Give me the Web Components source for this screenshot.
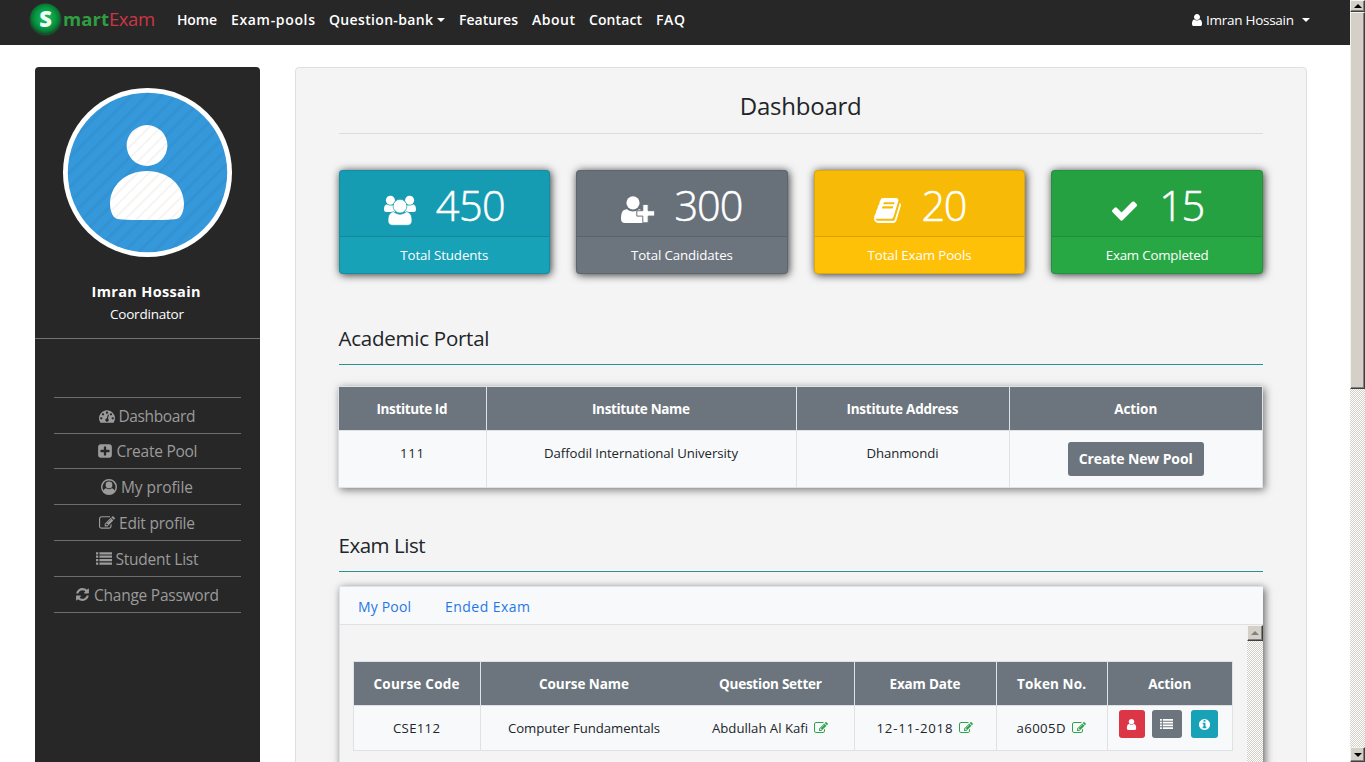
<!DOCTYPE html>
<html lang="en">
<head>
<meta charset="utf-8">
<title>SmartExam - Dashboard</title>
<style>
html,body{margin:0;height:762px;overflow:hidden;background:#fff}
body{font-family:"Open Sans","Noto Sans",sans-serif;font-size:13.500px;color:#212529}
</style>
</head>
<body>
<exam-app></exam-app>
<script>
const ICONS = {
user:'<path d="M1536 1399q0 109-62.500 187t-150.500 78h-854q-88 0-150.500-78t-62.500-187q0-85 8.500-160.500t31.500-152 58.500-131 94-89 134.500-34.500q131 128 313 128t313-128q76 0 134.500 34.500t94 89 58.500 131 31.500 152 8.500 160.500zm-256-887q0 159-112.500 271.500t-271.500 112.500-271.500-112.500-112.500-271.500 112.500-271.500 271.500-112.500 271.500 112.500 112.500 271.500z"/>',
list:'<path d="M0 130h256v250H0zM384 130h1408v250H384zM0 514h256v250H0zM384 514h1408v250H384zM0 898h256v250H0zM384 898h1408v250H384zM0 1282h256v250H0zM384 1282h1408v250H384z"/>',
check:'<path d="M1671 566q0 40-28 68l-724 724-136 136q-28 28-68 28t-68-28l-136-136-362-362q-28-28-28-68t28-68l136-136q28-28 68-28t68 28l294 295 656-657q28-28 68-28t68 28l136 136q28 28 28 68z"/>',
plus:'<path d="M1408 960v-128q0-26-19-45t-45-19h-320v-320q0-26-19-45t-45-19h-128q-26 0-45 19t-19 45v320h-320q-26 0-45 19t-19 45v128q0 26 19 45t45 19h320v320q0 26 19 45t45 19h128q26 0 45-19t19-45v-320h320q26 0 45-19t19-45zm256-544v960q0 119-84.500 203.500t-203.500 84.500h-960q-119 0-203.500-84.500t-84.500-203.500v-960q0-119 84.500-203.500t203.500-84.500h960q119 0 203.500 84.500t84.500 203.500z"/>',
edit:'<path d="M888 1184l116-116-152-152-116 116v56h96v96h56zm440-720q-16-16-33 1l-350 350q-17 17-1 33t33-1l350-350q17-17 1-33zm80 594v190q0 119-84.500 203.500t-203.500 84.500h-832q-119 0-203.500-84.500t-84.500-203.500v-832q0-119 84.500-203.500t203.500-84.500h832q63 0 117 25 15 7 18 23 3 17-9 29l-49 49q-14 14-32 8-23-6-45-6h-832q-66 0-113 47t-47 113v832q0 66 47 113t113 47h832q66 0 113-47t47-113v-126q0-13 9-22l64-64q15-15 35-7t20 29zm-96-738l288 288-672 672h-288v-288zm444 132l-92 92-288-288 92-92q28-28 68-28t68 28l152 152q28 28 28 68t-28 68z"/>',
refresh:'<path d="M1639 1056q0 5-1 7-64 268-268 434.500t-478 166.500q-146 0-282.500-55t-243.500-157l-129 129q-19 19-45 19t-45-19-19-45v-448q0-26 19-45t45-19h448q26 0 45 19t19 45-19 45l-137 137q71 66 161 102t187 36q134 0 250-65t186-179q11-17 53-117 8-23 30-23h192q13 0 22.500 9.500t9.500 22.500zm25-800v448q0 26-19 45t-45 19h-448q-26 0-45-19t-19-45 19-45l138-138q-148-137-349-137-134 0-250 65t-186 179q-11 17-53 117-8 23-30 23h-199q-13 0-22.500-9.500t-9.500-22.500v-7q65-268 270-434.500t480-166.500q146 0 284 55.500t245 156.500l130-129q19-19 45-19t45 19 19 45z"/>',
info:'<path d="M1152 1376v-160q0-14-9-23t-23-9h-96v-512q0-14-9-23t-23-9h-320q-14 0-23 9t-9 23v160q0 14 9 23t23 9h96v320h-96q-14 0-23 9t-9 23v160q0 14 9 23t23 9h448q14 0 23-9t9-23zm-128-896v-160q0-14-9-23t-23-9h-192q-14 0-23 9t-9 23v160q0 14 9 23t23 9h192q14 0 23-9t9-23zm640 416q0 209-103 385.500t-279.500 279.500-385.500 103-385.500-103-279.500-279.500-103-385.500 103-385.500 279.500-279.500 385.500-103 385.500 103 279.500 279.500 103 385.500z"/>',
dash:'<path d="M384 1152q0-53-37.500-90.500t-90.500-37.500-90.500 37.500-37.500 90.500 37.500 90.500 90.500 37.500 90.500-37.500 37.500-90.500zm192-448q0-53-37.500-90.500t-90.500-37.500-90.500 37.500-37.500 90.500 37.500 90.500 90.500 37.500 90.500-37.500 37.500-90.500zm428 481l101-382q6-26-7.500-48.500t-38.500-29.500-48 6.500-30 39.500l-101 382q-60 5-107 43.500t-63 98.500q-20 77 20 146t117 89 146-20 89-117q16-60-6-117t-72-91zm660-33q0-53-37.500-90.500t-90.500-37.500-90.500 37.500-37.500 90.500 37.500 90.500 90.500 37.500 90.500-37.500 37.500-90.500zm-640-640q0-53-37.500-90.500t-90.500-37.500-90.500 37.500-37.500 90.500 37.500 90.500 90.500 37.500 90.500-37.500 37.500-90.500zm448 192q0-53-37.500-90.500t-90.500-37.500-90.500 37.500-37.500 90.500 37.500 90.500 90.500 37.500 90.500-37.500 37.500-90.500zm320 448q0 261-141 483-19 29-54 29h-1402q-35 0-54-29-141-221-141-483 0-182 71-348t191-286 286-191 348-71 348 71 286 191 191 286 71 348z"/>',
book:'<path d="M1703 478q40 57 18 129l-275 906q-19 64-76.500 107.500t-122.500 43.500h-923q-77 0-148.500-53.500t-99.500-131.500q-24-67-2-127 0-4 3-27t4-37q1-8-3-21.500t-3-19.500q2-11 8-21t16.500-23.500 16.500-23.500q23-38 45-91.500t30-91.500q3-10 .5-30t-.5-28q3-11 17-28t17-23q21-36 42-92t25-90q1-9-2.500-32t.5-28q4-13 22-30.500t22-22.500q19-26 42.500-84.500t27.500-96.500q1-8-3-25.500t-2-26.500q2-8 9-18t18-23 17-21q8-12 16.500-30.500t15-35 16-36 19.500-32 26.500-23.500 36-11.500 47.500 5.500l-1 3q38-9 51-9h761q74 0 114 56t18 130l-274 906q-36 119-71.500 153.500t-128.500 34.500h-869q-27 0-38 15-11 16-1 43 24 70 144 70h923q29 0 56-15.500t35-41.500l300-987q7-22 5-57 38 15 59 43zm-1064 2q-4 13 2 22.500t20 9.500h608q13 0 25.500-9.500t16.500-22.500l21-64q4-13-2-22.500t-20-9.500h-608q-13 0-25.500 9.500t-16.500 22.500zm-83 256q-4 13 2 22.500t20 9.500h608q13 0 25.500-9.500t16.500-22.500l21-64q4-13-2-22.500t-20-9.500h-608q-13 0-25.500 9.500t-16.500 22.500z"/>',
profile:'<path fill-rule="evenodd" d="M896 0a896 896 0 1 0 0 1792A896 896 0 1 0 896 0zM896 170a726 726 0 0 1 600 1130c-42-170-136-276-286-276-84 78-190 120-314 120s-230-42-314-120c-150 0-244 106-286 276A726 726 0 0 1 896 170z"/><circle cx="896" cy="660" r="380"/>',
users:'<g transform="scale(56)"><circle cx="6.400" cy="5.200" r="4.500"/><circle cx="25.600" cy="5.200" r="4.500"/><path d="M3 9.500c2 1.400 4.800 1.400 7 .2L11 17H2.500Q0 17 0 14.500c0-2.500.8-5 3-5zM29 9.500c-2 1.400-4.800 1.400-7 .2L21 17h8.500Q32 17 32 14.500c0-2.500-.8-5-3-5z"/><g stroke="#179db2" stroke-width=".7"><path d="M9.800 16.700c3.400 3.300 9 3.300 12.400 0 3.700.2 5.800 3.200 5.800 8.900 0 3.200-1.800 4.700-4.400 4.700h-15.200c-2.600 0-4.400-1.500-4.400-4.700 0-5.700 2.100-8.700 5.800-8.900z"/><circle cx="16" cy="11.200" r="6.900"/></g></g>',
addUser:'<g transform="scale(52.700)"><circle cx="12" cy="9.800" r="6.600"/><path d="M6.100 16.200c3.600 3 8.200 3 11.800 0l1.600.3V23h5v6.200q-1 .8-3 .8H4.100Q0 30 0 26c0-5.600 1.200-9.800 6.100-9.800z"/><path stroke="#69727a" stroke-width="1" d="M21.800 11.400h5.400v6.300h6.500v5.400h-6.500v6.700h-5.400v-6.700h-6v-5.400h6z"/></g>'
};
class Base extends HTMLElement{
  render(css,html){
    const t=document.createElement('template');
    t.innerHTML='<style>'+css+'</style>'+html;
    this.attachShadow({mode:'open'}).append(t.content.cloneNode(true));
  }
}
/* A one-line label whose tracking is adjusted to a given width. */
customElements.define('fit-text',class extends Base{
  connectedCallback(){
    if(this.shadowRoot)return;
    this.render(':host{display:inline-block;white-space:nowrap;flex:none}span{display:inline-block}','<span><slot></slot></span>');
    const w=+this.getAttribute('w');
    if(w){
      const s=this.shadowRoot.querySelector('span');
      const n=this.textContent.length,d=(w-s.getBoundingClientRect().width)/Math.max(1,n-1);
      s.style.letterSpacing=d+'px';s.style.marginRight=-d+'px';
    }
  }
});
customElements.define('fa-icon',class extends Base{
  connectedCallback(){
    if(this.shadowRoot)return;
    const s=this.getAttribute('size')||16;
    this.render(`:host{display:inline-block;flex:none;width:${s}px;height:${s}px}svg{display:block;overflow:visible;fill:currentColor}`,
    `<svg width="${s}" height="${s}" viewBox="0 0 1792 1792">${ICONS[this.getAttribute('name')]}</svg>`);
  }
});
customElements.define('nav-bar',class extends Base{
  connectedCallback(){this.render(`
  :host{display:flex;height:45px;background:#272727;color:#fff;font-size:14px;font-weight:600;box-sizing:border-box;padding:0 40px 5px 29px;align-items:center}
  .logo{flex:none;margin-top:-2px}
  .brand{display:flex;align-items:center;font-size:18.500px;width:93px;margin:-3px 21px 0 1px}
  .brand b{color:#2f9e41;font-weight:700}.brand i{font-style:normal;font-weight:400;color:#cc3545}
  nav{display:flex;gap:14px;align-items:center;margin-top:-2px}
  .caret{display:inline-block;border:4px solid transparent;border-top-color:currentColor;border-bottom:0;vertical-align:3px;margin-left:4px}
  .me{margin-left:auto;display:flex;align-items:center;font-weight:400;font-size:13.500px}
  .me fa-icon{margin-right:2px}.me .caret{margin-left:8px}`,`
  <svg class="logo" width="33" height="33" viewBox="0 0 33 33"><defs><radialGradient id="g" cx="50%" cy="45%"><stop offset="0" stop-color="#25b865"/><stop offset=".62" stop-color="#079b43"/><stop offset=".85" stop-color="#087936"/><stop offset="1" stop-color="#174d2b"/></radialGradient></defs><circle cx="16.500" cy="16.500" r="16" fill="url(#g)"/><text x="16.500" y="24.300" text-anchor="middle" font-family="Open Sans" font-weight="800" font-size="22" fill="#effff6">S</text></svg>
  <div class="brand"><b><fit-text w="46">mart</fit-text></b><i><fit-text w="46">Exam</fit-text></i></div>
  <nav><fit-text w="40">Home</fit-text><fit-text w="84">Exam-pools</fit-text><span><fit-text w="104">Question-bank</fit-text><span class="caret"></span></span><fit-text w="59">Features</fit-text><fit-text w="43">About</fit-text><fit-text w="53">Contact</fit-text><fit-text w="29">FAQ</fit-text></nav>
  <div class="me"><fa-icon name="user" size="14"></fa-icon><fit-text w="88">Imran Hossain</fit-text><span class="caret"></span></div>`)}
});
customElements.define('side-item',class extends Base{
  connectedCallback(){const a=n=>this.getAttribute(n);this.render(`
  :host{display:flex;height:36px;box-sizing:border-box;border-bottom:1px solid #6d6d6d;align-items:center;justify-content:center;gap:4px;font-size:15.500px;color:#9b9b9b;padding-right:1px}`,
  `<fa-icon name="${a('icon')}" size="${a('size')||16}"></fa-icon><fit-text w="${a('w')}">${a('label')}</fit-text>`)}
});
customElements.define('side-bar',class extends Base{
  connectedCallback(){this.render(`
  :host{display:block;box-sizing:border-box;width:225px;height:695px;background:#272727;border-radius:4px 4px 0 0;color:#fff;text-align:center;padding-top:21px}
  svg{display:block;margin:0 auto 23px}
  .name{font-weight:700;font-size:14.500px;line-height:23px;padding-right:3px}.role{line-height:22px;height:35px;border-bottom:1px solid #737373;font-size:13.500px;padding-right:1px}
  .menu{margin:58px 19px 0;border-top:1px solid #6d6d6d}`,`
  <svg width="169" height="169" viewBox="0 0 169 169"><defs><pattern id="p" width="10.500" height="10.500" patternUnits="userSpaceOnUse" patternTransform="rotate(45)"><rect width="10.500" height="10.500" fill="#3498db"/><rect width="3" height="10.500" fill="#3292d2"/></pattern><pattern id="q" width="8" height="8" patternUnits="userSpaceOnUse" patternTransform="rotate(45)"><rect width="8" height="8" fill="#fff"/><rect width="1.500" height="8" fill="#f4f1ef"/></pattern></defs>
  <circle cx="84.500" cy="84.500" r="84.500" fill="#fff"/><circle cx="84.500" cy="84.500" r="79.700" fill="url(#p)"/><circle cx="84" cy="57.500" r="20.400" fill="url(#q)"/><path d="M84 83c22 0 37 15 37 33 0 5-1.500 10-4 13q-1.500 1.800-5 2.200c-18 1.200-38 1.200-56 0q-3.500-.4-5-2.200c-2.500-3-4-8-4-13 0-18 15-33 37-33z" fill="url(#q)"/></svg>
  <div class="name"><fit-text w="109">Imran Hossain</fit-text></div><div class="role"><fit-text w="74">Coordinator</fit-text></div>
  <div class="menu"><side-item icon="dash" label="Dashboard" w="77"></side-item><side-item icon="plus" label="Create Pool" w="81" style="height:35px"></side-item><side-item icon="profile" label="My profile" w="72"></side-item><side-item icon="edit" label="Edit profile" w="76"></side-item><side-item icon="list" label="Student List" w="83"></side-item><side-item icon="refresh" label="Change Password" w="125" size="15"></side-item></div>`)}
});
customElements.define('stat-card',class extends Base{
  connectedCallback(){const a=n=>this.getAttribute(n);this.render(`
  :host{display:flex;flex-direction:column;height:104px;box-sizing:border-box;background:${a('color')};border:1px solid rgba(0,0,0,.125);border-radius:4px;color:#fff;box-shadow:1px 1px 8px rgba(0,0,0,.8)}
  .top{height:65px;background:rgba(0,0,0,.03);border-bottom:1px solid rgba(0,0,0,.125);display:flex;justify-content:center;align-items:center;font-size:41.500px;font-weight:300;gap:${a('gap')}px;line-height:65px;padding-left:1px}
  .top fit-text{margin-top:4px;-webkit-text-stroke:.5px #fff}
  .top fa-icon{margin-top:${a('dy')}px}
  .bot{flex:1;display:flex;align-items:center;justify-content:center;font-size:13.300px;padding-bottom:1px}`,
  `<div class="top"><fa-icon name="${a('icon')}" size="${a('size')}"></fa-icon><fit-text w="${a('nw')}">${a('value')}</fit-text></div><div class="bot"><fit-text w="${a('w')}">${a('label')}</fit-text></div>`)}
});
customElements.define('section-title',class extends Base{
  connectedCallback(){this.render(`:host{display:block;box-sizing:border-box;height:45px;border-bottom:1px solid #2b9193;font-size:20.500px;line-height:36px}`,`<slot></slot>`)}
});
/* Table row: cells are slotted into a grid whose columns come from --cols. */
customElements.define('table-row',class extends Base{
  connectedCallback(){this.render(`
  :host{display:grid;grid-template-columns:var(--cols);background:#f8f9fb;border-bottom:1px solid #dee2e6}
  :host([head]){background:#6c757d;color:#fff;font-weight:700}
  ::slotted(*){display:flex;justify-content:center;align-items:center;border-right:1px solid #dee2e6;box-sizing:border-box;min-width:0}
  ::slotted(.nb){border-right:0}`,`<slot></slot>`)}
});
customElements.define('icon-button',class extends Base{
  connectedCallback(){const a=n=>this.getAttribute(n);this.render(`:host{display:flex;width:${a('w')}px;height:28px;border-radius:3px;align-items:center;justify-content:center;background:${a('color')};color:#fff;flex:none}`,`<fa-icon name="${a('icon')}" size="${a('size')||13}"></fa-icon>`)}
});
customElements.define('scroll-track',class extends Base{
  connectedCallback(){const h=this.hasAttribute('thumb');this.render(`
  :host{display:flex;flex-direction:column;background:repeating-conic-gradient(#d4d0c8 0 25%,#fff 0 50%) 0 0/2px 2px;box-sizing:border-box}
  .b{height:16px;box-sizing:border-box;background:#d4d0c8;border:1px solid;border-color:#f4f2ee #404040 #404040 #f4f2ee;box-shadow:inset -1px -1px #808080;display:flex;align-items:center;justify-content:center;flex:none}
  .b.first{height:${h?12:16}px}.t{height:377px}.b.last{margin-top:auto;height:15px}
  i{border:4px solid transparent;border-bottom-color:${h?'#000':'#808080'};border-top:0}.d{border-top:4px solid #000;border-bottom:0}`,
  `<div class="b first"><i></i></div>${h?'<div class="b t"></div><div class="b last"><i class="d"></i></div>':''}`)}
});
customElements.define('dash-board',class extends Base{
  connectedCallback(){this.render(`
  :host{display:block;box-sizing:border-box;width:1012px;height:760px;border:1px solid #dfdfdf;border-radius:4px;background:#f4f4f4;padding:18px 43px 0 42.500px}
  .title{height:48px;box-sizing:border-box;border-bottom:1px solid #dcdcdc;text-align:center;font-size:24px;line-height:40px}
  .cards{display:grid;grid-template-columns:repeat(4,1fr);gap:26px;margin:36px 0 46px}
  .portal{--cols:148px 310px 213px 1fr;margin:21px 0 39px -1px;border:1px solid #dee2e6;border-right:0;border-bottom:0;box-shadow:2px 2px 8px rgba(0,0,0,.5)}
  .portal table-row[head]{height:43px}.portal .r{height:56px}
  .r{font-size:13.200px}
  .portal .r fit-text{margin-top:-12px}
  .btn{height:34px;width:136px;border-radius:3px;background:#6c757d;color:#fff;display:flex;align-items:center;justify-content:center;font-weight:700;font-size:14px}
  .btn fit-text{margin:-2px 0 0!important}
  .exam{margin-top:14px;border:1px solid #dee2e6;border-right:0;box-sizing:border-box;height:230px;box-shadow:2px 2px 8px rgba(0,0,0,.6);background:#f4f4f4}
  .tabs{background:#f8f9fb;border-bottom:1px solid #dee2e6;color:#1f78e6;font-size:14px;display:flex;align-items:center;gap:34px;padding:1px 0 0 18.500px;box-sizing:border-box;height:38px}
  .body{display:grid;grid-template-columns:1fr 16px;height:190px}
  .et{--cols:127px 207px 167px 142px 111px 1fr;margin:36px 14px 0 13px;border:1px solid #dee2e6;border-right:0;border-bottom:0;height:89px}
  .et table-row[head]{height:43px}.et .r{height:44px}.et fa-icon{color:#2fa24b;margin:0 1px 0 6px}
  .et .act{align-items:flex-start;justify-content:flex-start;padding:4px 0 0 11px}
  icon-button+icon-button{margin-left:7px}icon-button:last-child{margin-left:9px}`,`
  <div class="title"><fit-text w="122">Dashboard</fit-text></div>
  <div class="cards">
   <stat-card color="#17a2b8" icon="users" size="32" dy="15" gap="20" value="450" nw="70" label="Total Students" w="88"></stat-card>
   <stat-card color="#6c757d" icon="addUser" size="34" dy="13" gap="19" value="300" nw="69" label="Total Candidates" w="102"></stat-card>
   <stat-card color="#ffc107" icon="book" size="29" dy="14" gap="20" value="20" nw="46" label="Total Exam Pools" w="104"></stat-card>
   <stat-card color="#28a745" icon="check" size="29" dy="14" gap="20" value="15" nw="46" label="Exam Completed" w="103"></stat-card>
  </div>
  <section-title><fit-text w="151">Academic Portal</fit-text></section-title>
  <div class="portal"><table-row head><div><fit-text w="71">Institute Id</fit-text></div><div><fit-text w="98">Institute Name</fit-text></div><div><fit-text w="112">Institute Address</fit-text></div><div><fit-text w="43">Action</fit-text></div></table-row>
  <table-row class="r"><div><fit-text w="24">111</fit-text></div><div><fit-text w="194">Daffodil International University</fit-text></div><div><fit-text w="72">Dhanmondi</fit-text></div><div><span class="btn"><fit-text w="114">Create New Pool</fit-text></span></div></table-row></div>
  <section-title><fit-text w="87">Exam List</fit-text></section-title>
  <div class="exam"><div class="tabs"><fit-text w="53">My Pool</fit-text><fit-text w="85">Ended Exam</fit-text></div>
  <div class="body"><div class="et"><table-row head><div><fit-text w="86">Course Code</fit-text></div><div class="nb"><fit-text w="90">Course Name</fit-text></div><div><fit-text w="103">Question Setter</fit-text></div><div><fit-text w="71">Exam Date</fit-text></div><div><fit-text w="69">Token No.</fit-text></div><div><fit-text w="43">Action</fit-text></div></table-row>
  <table-row class="r"><div><fit-text w="47">CSE112</fit-text></div><div class="nb"><fit-text w="152">Computer Fundamentals</fit-text></div><div><fit-text w="96">Abdullah Al Kafi</fit-text><fa-icon name="edit" size="14"></fa-icon></div><div><fit-text w="76">12-11-2018</fit-text><fa-icon name="edit" size="14"></fa-icon></div><div><fit-text w="49">a6005D</fit-text><fa-icon name="edit" size="14"></fa-icon></div><div class="act"><icon-button w="26" color="#dc3545" icon="user"></icon-button><icon-button w="30" color="#6c757d" icon="list"></icon-button><icon-button w="27" color="#17a2b8" icon="info"></icon-button></div></table-row></div><scroll-track></scroll-track></div></div>`)}
});
customElements.define('exam-app',class extends Base{
  connectedCallback(){this.render(`
  :host{display:grid;grid-template-columns:1350px 15px;height:762px;overflow:hidden}
  .page{height:762px;overflow:hidden}.cols{display:flex;gap:35px;padding:22px 0 0 35px}`,`
  <div class="page"><nav-bar></nav-bar><div class="cols"><side-bar></side-bar><dash-board></dash-board></div></div><scroll-track thumb></scroll-track>`)}
});
</script>
</body>
</html>
